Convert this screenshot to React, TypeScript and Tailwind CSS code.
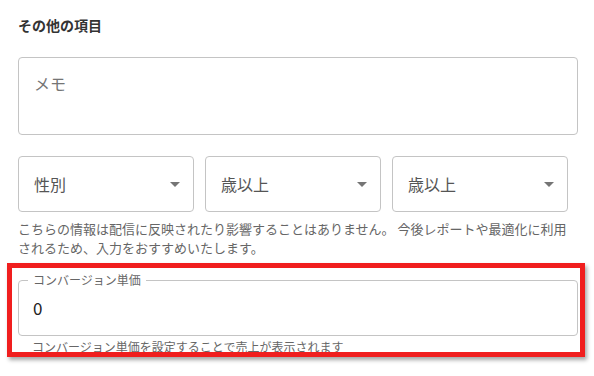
import React from 'react';

const font = { fontFamily: '"Noto Sans CJK JP", "Noto Sans", sans-serif' };

const selects = ['性別', '歳以上', '歳以上'];

const Arrow = () => (
  <svg width="10" height="5" viewBox="0 0 10 5" className="shrink-0">
    <path d="M0 0 L10 0 L5 5 Z" fill="#757575" />
  </svg>
);

const App = () => {
  return (
    <div className="relative w-[594px] h-[376px] overflow-hidden bg-white" style={font}>
      <div className="pl-[18px] pt-[16px]">
        {/* section title */}
        <h3 className="text-[14px] leading-[18px] font-bold text-[#333]">その他の項目</h3>

        {/* memo */}
        <div className="mt-[23px] w-[560px] h-[78px] rounded-[4px] border border-[#c4c4c4] px-[15px] pt-[13px]">
          <span className="text-[16px] leading-[24px] text-[#757575]">メモ</span>
        </div>

        {/* selects */}
        <div className="mt-[21px] w-[550px] flex gap-[11px]">
          {selects.map((s, i) => (
            <div
              key={i}
              className="w-[176px] h-[56px] rounded-[4px] border border-[#c4c4c4] flex items-center justify-between pl-[15px] pr-[13px]"
            >
              <span className="text-[16px] text-[#555]">{s}</span>
              <Arrow />
            </div>
          ))}
        </div>
        <p className="mt-[7px] w-[552px] text-[13px] leading-[19px] text-[#666]">
          こちらの情報は配信に反映されたり影響することはありません。 今後レポートや最適化に利用されるため、入力をおすすめいたします。
        </p>

        {/* conversion price */}
        <div className="relative mt-[23px] w-[560px] h-[56px] rounded-[4px] border border-[#c4c4c4] flex items-center pl-[14px]">
          <span className="absolute left-[9px] -top-[9px] bg-white px-[5px] text-[12px] leading-[16px] text-[#666]">
            コンバージョン単価
          </span>
          <span className="text-[17px] text-[#222]">0</span>
        </div>
        <p className="mt-[1px] pl-[14px] text-[12px] leading-[20px] text-[#666]">
          コンバージョン単価を設定することで売上が表示されます
        </p>
      </div>

      {/* annotation highlight */}
      <div className="absolute left-[7px] top-[263px] w-[578px] h-[94px] border-[5px] border-[#f01e1e] shadow-[2px_3px_4px_rgba(0,0,0,0.35)] pointer-events-none" />
    </div>
  );
};

export default App;
